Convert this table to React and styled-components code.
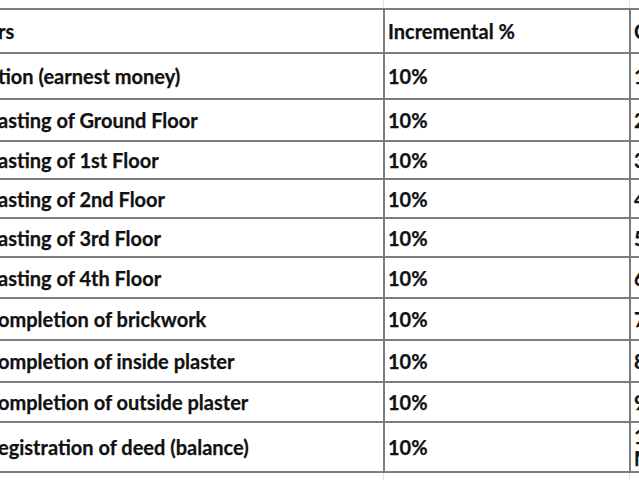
import React from "react";
import styled, { createGlobalStyle } from "styled-components";

const Global = createGlobalStyle`
  html, body { margin: 0; padding: 0; background: #fff; }
  body { font-family: Lato, "Open Sans", "Liberation Sans", sans-serif; }
`;

const Sheet = styled.div`
  width: 639px;
  height: 480px;
  overflow: hidden;
  box-sizing: border-box;
  padding-top: 8px;
  background:
    linear-gradient(#e2e2e2, #e2e2e2) 383px 0 / 1px 100% no-repeat,
    linear-gradient(#e2e2e2, #e2e2e2) 629px 0 / 1px 100% no-repeat,
    #fff;
`;

const Table = styled.div`
  display: grid;
  grid-template-columns: 385px 246px 160px;
  border-top: 2px solid #7c7c7c;
  background: #fff;
  width: max-content;
`;

const Cell = styled.div`
  box-sizing: border-box;
  height: ${(p) => p.$h}px;
  border-bottom: 2px solid #7c7c7c;
  border-right: ${(p) => (p.$last ? "none" : "2px solid #7c7c7c")};
  display: flex;
  flex-direction: column;
  justify-content: center;
  padding-left: ${(p) => (p.$first ? "0" : "3px")};
  overflow: hidden;
  white-space: nowrap;
  font-weight: 700;
  font-size: 20px;
  line-height: 22px;
  color: #111;
  -webkit-text-stroke: 0.25px #111;
`;

const Clip = styled.span`
  margin-left: -2px;
`;

const rows = [
  { h: 44, a: "rs", b: "Incremental %", c: ["Cumulative %"] },
  { h: 46, a: "tion (earnest money)", b: "10%", c: ["10%"] },
  { h: 42, a: "asting of Ground Floor", b: "10%", c: ["20%"] },
  { h: 38, a: "asting of 1st Floor", b: "10%", c: ["30%"] },
  { h: 39, a: "asting of 2nd Floor", b: "10%", c: ["40%"] },
  { h: 39, a: "asting of 3rd Floor", b: "10%", c: ["50%"] },
  { h: 41, a: "asting of 4th Floor", b: "10%", c: ["60%"] },
  { h: 42, a: "ompletion of brickwork", b: "10%", c: ["70%"] },
  { h: 42, a: "ompletion of inside plaster", b: "10%", c: ["80%"] },
  { h: 40, a: "ompletion of outside plaster", b: "10%", c: ["90%"] },
  { h: 50, a: "egistration of deed (balance)", b: "10%", c: ["100%", "Misc. Charges"] },
];

export default function App() {
  return (
    <>
      <Global />
      <Sheet>
        <Table>
          {rows.map((r, i) => (
            <React.Fragment key={i}>
              <Cell $h={r.h} $first>
                <Clip>{r.a}</Clip>
              </Cell>
              <Cell $h={r.h}>{r.b}</Cell>
              <Cell $h={r.h} $last>
                {r.c.map((t) => (
                  <span key={t}>{t}</span>
                ))}
              </Cell>
            </React.Fragment>
          ))}
        </Table>
      </Sheet>
    </>
  );
}
